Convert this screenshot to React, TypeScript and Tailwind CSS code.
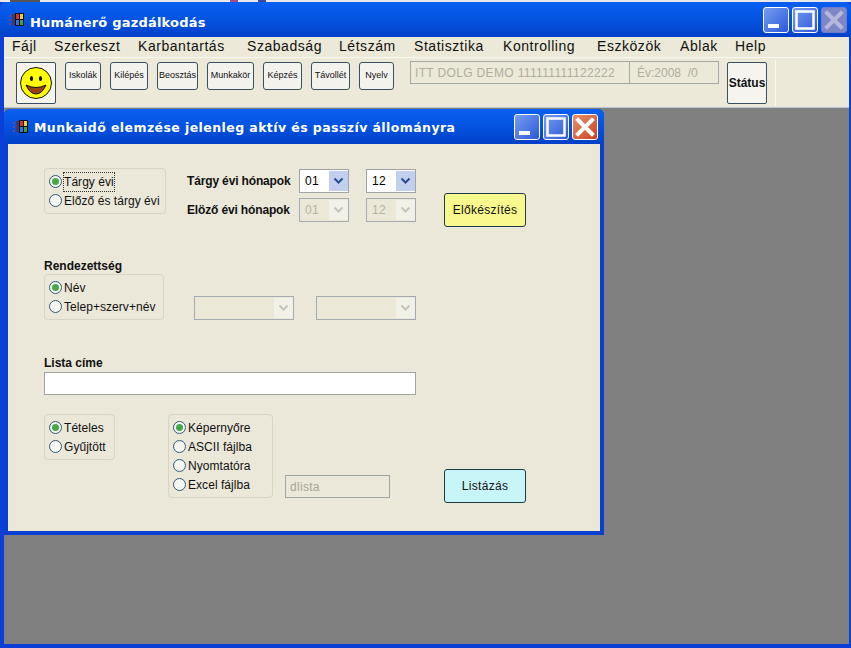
import type { ReactNode } from "react";

const menus = [
	{ label: "Fájl", width: "w-[24px]" },
	{ label: "Szerkeszt", width: "w-[66px]" },
	{ label: "Karbantartás", width: "w-[91px]" },
	{ label: "Szabadság", width: "w-[74px]" },
	{ label: "Létszám", width: "w-[57px]" },
	{ label: "Statisztika", width: "w-[71px]" },
	{ label: "Kontrolling", width: "w-[76px]" },
	{ label: "Eszközök", width: "w-[65px]" },
	{ label: "Ablak", width: "w-[37px]" },
	{ label: "Help", width: "w-[31px]" },
];

const tools = [
	{ label: "Iskolák", width: "w-[36px]" },
	{ label: "Kilépés", width: "w-[38px]" },
	{ label: "Beosztás", width: "w-[41px]" },
	{ label: "Munkakör", width: "w-[47px]" },
	{ label: "Képzés", width: "w-[39px]" },
	{ label: "Távollét", width: "w-[39px]" },
	{ label: "Nyelv", width: "w-[35px]" },
];

function Flag() {
	return (
		<svg width="16" height="16" viewBox="0 0 16 16" className="shrink-0">
			<rect x="0" y="3" width="2" height="2" fill="#6a4a8c" />
			<rect x="0" y="7" width="2" height="2" fill="#6a4a8c" />
			<rect x="0" y="11" width="2" height="2" fill="#6a4a8c" />
			<rect x="3" y="2" width="3" height="11" fill="#3a3a70" />
			<rect x="6" y="1" width="9" height="13" fill="#101018" />
			<rect x="7" y="2" width="3" height="5" fill="#d8332a" />
			<rect x="11" y="2" width="3" height="5" fill="#e8d040" />
			<rect x="7" y="8" width="3" height="5" fill="#3f6fd8" />
			<rect x="11" y="8" width="3" height="5" fill="#3fa04a" />
		</svg>
	);
}

function WinButton({ kind, disabled }: { kind: "min" | "max" | "close"; disabled?: boolean }) {
	const tone =
		kind === "close"
			? disabled
				? "bg-[#7f86c4] border-[#6f7dd0]"
				: "bg-gradient-to-br from-[#e8906c] to-[#c8401c] border-white"
			: "bg-gradient-to-br from-[#7a9cf0] to-[#2a58d8] border-white";
	return (
		<div className={`flex h-[26px] w-[26px] items-center justify-center rounded-[3px] border ${tone}`}>
			<svg width="24" height="24" viewBox="0 0 24 24">
				{kind === "min" && <rect x="4" y="16" width="11" height="4" fill="#fff" />}
				{kind === "max" && <rect x="3.5" y="3.5" width="17" height="17" fill="none" stroke="#fff" strokeWidth="2.5" />}
				{kind === "close" && (
					<path d="M5 5 L19 19 M19 5 L5 19" stroke={disabled ? "#b5b8dc" : "#fff"} strokeWidth="4" strokeLinecap="square" />
				)}
			</svg>
		</div>
	);
}

function Radio({ label, checked, focus }: { label: string; checked?: boolean; focus?: boolean }) {
	return (
		<div className="flex h-[19px] items-center">
			<span className="flex h-[13px] w-[13px] shrink-0 items-center justify-center rounded-full border border-[#2f5a78] bg-[#f6f6f0]">
				{checked && <span className="h-[7px] w-[7px] rounded-full bg-[#47a84a]" />}
			</span>
			<span className={`ml-[2px] tracking-[0.05px] whitespace-nowrap ${focus ? "outline-1 outline-dotted outline-[#333]" : ""}`}>{label}</span>
		</div>
	);
}

function Group({ className, children }: { className: string; children: ReactNode }) {
	return (
		<div className={`flex shrink-0 flex-col justify-center rounded-[4px] border border-[#d8d3c2] pl-[4px] ${className}`}>{children}</div>
	);
}

function Select({ value, width, disabled }: { value?: string; width: string; disabled?: boolean }) {
	return (
		<div
			className={`flex h-[24px] items-center justify-between border pl-[5px] ${width} ${
				disabled ? "border-[#a4abb0] bg-[#ebe8d8] text-[#b5b2a4]" : "border-[#a0a4a4] bg-white text-black"
			}`}
		>
			<span className="tracking-[0.3px]">{value}</span>
			<span className={`flex h-[20px] w-[19px] items-center justify-center ${disabled ? "bg-[#f2f1e8]" : "bg-[#c2d0f0]"}`}>
				<svg width="11" height="8" viewBox="0 0 11 8">
					<path d="M1.5 1.5 L5.5 5.5 L9.5 1.5" fill="none" stroke={disabled ? "#c4c4bc" : "#2c4a90"} strokeWidth="2" />
				</svg>
			</span>
		</div>
	);
}

function Smiley() {
	return (
		<svg width="34" height="34" viewBox="0 0 34 34">
			<circle cx="17" cy="17" r="15.5" fill="#ffff00" stroke="#111" strokeWidth="1" />
			<ellipse cx="12.5" cy="12.5" rx="1.6" ry="2.6" fill="#111" />
			<ellipse cx="21.5" cy="12.5" rx="1.6" ry="2.6" fill="#111" />
			<path d="M7 19 Q17 24 27 19 Q23 28 17 28 Q11 28 7 19 Z" fill="#9a4212" stroke="#111" strokeWidth="1" />
		</svg>
	);
}

function ActionButton({ label, tone, className }: { label: string; tone: string; className: string }) {
	return (
		<div className={`flex h-[34px] w-[82px] shrink-0 items-center justify-center rounded-[3px] border border-[#1c3c48] tracking-[0.3px] ${tone} ${className}`}>
			{label}
		</div>
	);
}

export default function App() {
	return (
		<div className="relative flex h-[648px] w-[851px] flex-col overflow-hidden bg-[#0c3fd8] pb-[4px] pl-[4px] pr-[2px] font-['Liberation_Sans',sans-serif] text-[12px] text-[#111]">
			<div className="-ml-[4px] -mr-[2px] flex h-[2px] shrink-0 bg-[#e8e8e8]">
				<span className="ml-[10px] w-[30px] bg-[#555]" />
				<span className="ml-[190px] w-[8px] bg-[#a04a90]" />
				<span className="ml-[20px] w-[8px] bg-[#3a4aa0]" />
			</div>
			<header className="-ml-[4px] -mr-[2px] flex h-[35px] shrink-0 items-center rounded-t-[6px] bg-gradient-to-b from-[#0a5ff0] via-[#0453e0] to-[#0340c8] pl-[9px] pr-[4px]">
				<Flag />
				<h1 className="ml-[5px] mt-[6px] font-['DejaVu_Sans',sans-serif] text-[13px] font-bold tracking-[0.2px] text-white">Humánerő gazdálkodás</h1>
				<div className="ml-auto flex gap-[3px]">
					<WinButton kind="min" />
					<WinButton kind="max" />
					<WinButton kind="close" disabled />
				</div>
			</header>

			<nav className="flex h-[21px] shrink-0 items-center gap-[18px] border-b border-[#fafaf5] bg-[#ece9d8] pb-[2px] pl-[8px] text-[14px] tracking-[0.55px]">
				{menus.map((item) => (
					<span key={item.label} className={`whitespace-nowrap ${item.width}`}>
						{item.label}
					</span>
				))}
			</nav>

			<div className="flex h-[50px] shrink-0 items-start border-b border-[#b8c4d0] bg-[#ece9d8] pl-[12px] pt-[4px]">
				<div className="flex h-[42px] w-[40px] shrink-0 items-center justify-center rounded-[2px] border border-[#3a5060] bg-[#f5f4ee]">
					<Smiley />
				</div>
				{tools.map((tool) => (
					<div
						key={tool.label}
						className={`ml-[9px] flex h-[28px] shrink-0 items-center justify-center rounded-[3px] border border-[#3a5060] bg-[#f3f2ec] text-[9px] ${tool.width}`}
					>
						{tool.label}
					</div>
				))}
				<div className="ml-[16px] flex h-[23px] w-[309px] shrink-0 -translate-y-[1px] border border-[#a4a9a8] text-[12px] text-[#b0ada0]">
					<span className="flex w-[219px] items-center border-r border-[#a4a9a8] pl-[4px] tracking-[0.35px] whitespace-nowrap">ITT DOLG DEMO 111111111122222</span>
					<span className="flex items-center pl-[7px] whitespace-pre">Év:2008  /0</span>
				</div>
				<div className="ml-[8px] flex h-[42px] w-[40px] shrink-0 items-center justify-center rounded-[2px] border border-[#3a5060] bg-[#f5f4ee] text-[12px] font-bold">
					Státus
				</div>
				<div className="ml-[8px] h-[46px] w-px -translate-y-[2px] bg-[#fafaf5]" />
			</div>

			<main className="relative flex-1 bg-[#808080]">
				<section className="absolute left-0 top-[1px] flex h-[426px] w-[600px] flex-col rounded-t-[6px] bg-[#0a3fd0] px-[4px] pb-[4px]">
					<div className="-mx-[4px] flex h-[35px] shrink-0 items-center rounded-t-[6px] bg-gradient-to-b from-[#0a5ff0] via-[#0453e0] to-[#0340c8] pl-[9px] pr-[6px]">
						<Flag />
						<h2 className="ml-[5px] mt-[3px] font-['DejaVu_Sans',sans-serif] text-[12.5px] font-bold tracking-[0.42px] whitespace-nowrap text-white">
							Munkaidő elemzése jelenleg aktív és passzív állományra
						</h2>
						<div className="ml-auto flex gap-[3px]">
							<WinButton kind="min" />
							<WinButton kind="max" />
							<WinButton kind="close" />
						</div>
					</div>

					<div className="flex-1 bg-[#ebe8d9] pl-[36px] pt-[24px]">
						<div className="flex h-[59px] items-start">
							<Group className="h-[46px] w-[122px]">
								<Radio label="Tárgy évi" checked focus />
								<Radio label="Előző és tárgy évi" />
							</Group>
							<div className="ml-[21px] flex flex-col gap-[5px] pt-px">
								<div className="flex items-center">
									<span className="w-[112px] font-bold tracking-[-0.15px]">Tárgy évi hónapok</span>
									<Select value="01" width="w-[50px]" />
									<div className="ml-[17px]">
										<Select value="12" width="w-[50px]" />
									</div>
								</div>
								<div className="flex items-center">
									<span className="w-[112px] font-bold tracking-[-0.15px]">Elöző évi hónapok</span>
									<Select value="01" width="w-[50px]" disabled />
									<div className="ml-[17px]">
										<Select value="12" width="w-[50px]" disabled />
									</div>
								</div>
							</div>
							<ActionButton label="Előkészítés" tone="bg-[#f8f88e]" className="ml-[28px] mt-[25px]" />
						</div>

						<div className="mt-[30px] h-[16px] font-bold">Rendezettség</div>
						<div className="mt-[1px] flex items-end">
							<Group className="h-[46px] w-[120px]">
								<Radio label="Név" checked />
								<Radio label="Telep+szerv+név" />
							</Group>
							<div className="ml-[30px]">
								<Select width="w-[100px]" disabled />
							</div>
							<div className="ml-[22px]">
								<Select width="w-[100px]" disabled />
							</div>
						</div>

						<div className="mt-[34px] h-[15px] font-bold">Lista címe</div>
						<div className="mt-[3px] h-[23px] w-[372px] border border-[#a0a4a4] bg-white" />

						<div className="mt-[19px] flex items-start">
							<Group className="h-[46px] w-[71px]">
								<Radio label="Tételes" checked />
								<Radio label="Gyűjtött" />
							</Group>
							<Group className="ml-[53px] h-[84px] w-[105px]">
								<Radio label="Képernyőre" checked />
								<Radio label="ASCII fájlba" />
								<Radio label="Nyomtatóra" />
								<Radio label="Excel fájlba" />
							</Group>
							<div className="ml-[12px] mt-[61px] flex h-[23px] w-[105px] shrink-0 items-center border border-[#a0a4a4] pl-[4px] tracking-[0.3px] text-[#a8a598]">
								dlista
							</div>
							<ActionButton label="Listázás" tone="bg-[#c8f6f8]" className="ml-[54px] mt-[55px]" />
						</div>
					</div>
				</section>
			</main>
		</div>
	);
}
